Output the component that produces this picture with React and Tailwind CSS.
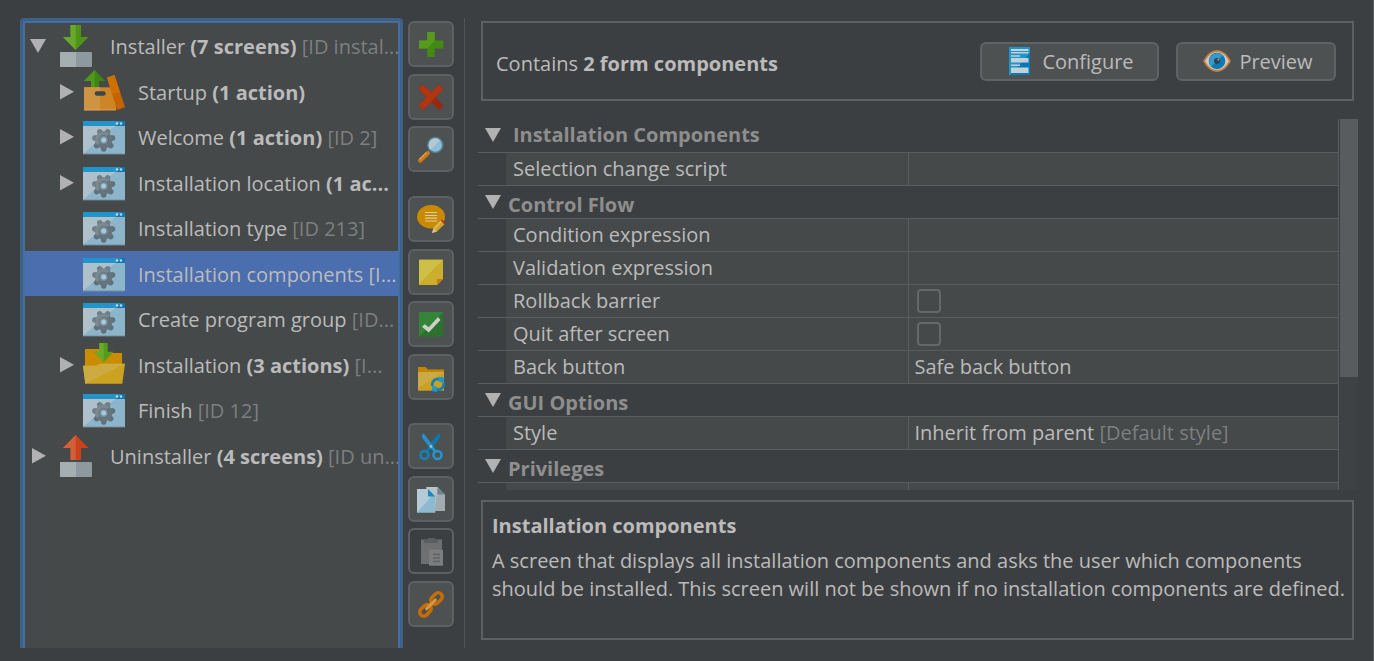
import React, { useState } from "react";

const TEETH = [90, 141.43, 192.86, 244.29, 295.71, 347.14, 38.57];

function WindowIcon() {
  return (
    <svg className="mb-0.5 shrink-0" width="42" height="42" viewBox="0 0 42 42" aria-hidden="true">
      <rect x="0" y="6" width="42" height="33" fill="#8cb5cb" />
      <path d="M0 6H38L0 39Z" fill="#aec1cb" />
      <rect x="0" y="38.4" width="42" height="1" fill="#7f95a0" />
      <rect x="0" y="6" width="42" height="5" fill="#2194cb" />
      <path d="M38 6H42V11H33Z" fill="#0879b4" />
      <circle cx="34" cy="8.5" r="1.3" fill="#c4d6df" />
      <circle cx="38" cy="8.5" r="1.3" fill="#c4d6df" />
      <g transform="translate(20.7 25)">
        {TEETH.map((a) => (
          <path key={a} d="M6-3.4 L10.6-2.4 Q11.8-2 11.8 0 Q11.8 2 10.6 2.4 L6 3.4Z" fill={a > 180 && a < 300 ? "#6f7e87" : "#61717b"} transform={`rotate(${a})`} />
        ))}
        <circle r="8.4" fill="#65747d" />
        <path d="M-6.6 5.2A8.4 8.4 0 0 1 5.6-6.3Z" fill="#7b8a91" />
        <circle r="4.6" fill="#7d8d96" stroke="#5c6d78" strokeWidth="0.8" />
        <circle r="2.5" fill="#a3cbe0" />
      </g>
    </svg>
  );
}

function InstallerIcon({ up }) {
  return (
    <svg className="shrink-0" width="32" height="42" viewBox="0 0 32 42" aria-hidden="true">
      <rect x="0" y="27" width="32" height="15" rx="1" fill="#8d999f" />
      <path d="M1 27H16V42H1Q0 42 0 41V28Q0 27 1 27Z" fill="#a5afb2" />
      {up ? (
        <>
          <path d="M15.700 0L28.500 13H21V25H10.500V13H3Z" fill="#ca431d" />
          <path d="M15.700 0L3 13H10.500V25H15.700Z" fill="#d0603a" />
        </>
      ) : (
        <>
          <path d="M10.500 0H21V12H28.500L15.700 25L3 12H10.500Z" fill="#4f9418" />
          <path d="M10.500 0H15.700V25L3 12H10.500Z" fill="#68a82c" />
        </>
      )}
    </svg>
  );
}

function StartupIcon() {
  return (
    <svg className="mb-0.5 shrink-0" width="42" height="42" viewBox="0 0 42 42" aria-hidden="true">
      <path d="M11.700 0L22.300 11H16V18H8V11H1Z" fill="#3f8511" />
      <path d="M11.700 0V18H8V11H1Z" fill="#4f981c" />
      <rect x="1" y="17.300" width="32" height="23" fill="#ce8526" />
      <path d="M1 17.300H17V40.300H1Z" fill="#cf9443" />
      <rect x="1" y="39.500" width="32" height="0.8" fill="#dfa458" />
      <rect x="11.700" y="21.300" width="11" height="4.400" rx="2.200" fill="#3c474c" />
      <path d="M24 7.500L31.500 5L42 37.300L34 40Z" fill="#c66300" />
      <path d="M24 7.500L31.500 5L37 22L29 24Z" fill="#cd7003" />
    </svg>
  );
}

function FolderInstallIcon() {
  return (
    <svg className="mb-0.5 shrink-0" width="42" height="42" viewBox="0 0 42 42" aria-hidden="true">
      <path d="M2 6H16L20 10H39V26H2Z" fill="#cb8c00" />
      <path d="M0 22.700H13.700L17 20.700H42L39.300 40.700H2.300Z" fill="#cca221" />
      <path d="M0 22.700H13.700L17 20.700H42L2.300 40.700Z" fill="#cbab42" />
      <path d="M16.300 0H24.700V8.700H30.500L20.700 19.300L11 8.700H16.300Z" fill="#579b1b" />
      <path d="M16.300 0H20.700V19.300L11 8.700H16.300Z" fill="#69aa2b" />
    </svg>
  );
}

function Triangle({ open }) {
  return (
    <svg className="shrink-0" width="16" height="16" viewBox="0 0 16 16" aria-hidden="true">
      {open ? <path d="M0 1H16L8 15Z" fill="#b1b1b1" /> : <path d="M2 0L16 7.700L2 15.500Z" fill="#b1b1b1" />}
    </svg>
  );
}

const TOOL_ICONS = {
  add: (
    <>
      <path d="M10.300 2H17.700V10.500H26.300V18.500H17.700V27H10.300V18.500H2V10.500H10.300Z" fill="#438a13" />
      <path d="M10.300 2H17.700V10.500L10.300 18.500H2V10.500H10.300Z" fill="#579b1c" />
    </>
  ),
  remove: (
    <>
      <path d="M1.500 6L6 1.500L14 9.500L22 1.500L26.500 6L18.500 14.300L26.500 22.500L22 27L14 19L6 27L1.500 22.500L9.500 14.300Z" fill="#98290d" />
      <path d="M1.500 6L6 1.500L14 9.500L22 1.500L26.500 6L6 27L1.500 22.500L9.500 14.300Z" fill="#b23512" />
    </>
  ),
  search: (
    <>
      <path d="M12.500 16.500L9.500 19.500" stroke="#7d8488" strokeWidth="2.500" />
      <path d="M10.500 18.500L3.200 25.500" stroke="#c97a12" strokeWidth="4.500" strokeLinecap="round" />
      <path d="M9.500 17.500L2.500 24.500" stroke="#dda050" strokeWidth="1.200" />
      <circle cx="18.300" cy="10" r="7.500" fill="#8fbdd3" stroke="#4e7d96" strokeWidth="1.600" />
      <path d="M13.500 14.800A6.700 6.700 0 0 1 23 5.200Z" fill="#b2c8d3" />
    </>
  ),
  comment: (
    <>
      <ellipse cx="14" cy="11.700" rx="14" ry="11.700" fill="#c98a00" />
      <path d="M8 7.500H20M8 10.500H20M8 13.200H20M8 16H20" stroke="#d9cda9" strokeWidth="1.200" />
      <path d="M15 28L16.500 23L23.500 15.500L27.500 19.300L20 26.500Z" fill="#d0a229" />
      <path d="M16.500 23L23.500 15.500L25 17L17.700 24.600Z" fill="#deb957" />
      <path d="M23.500 15.500L25 14.500L28 17.500L27.500 19.300Z" fill="#b93622" />
      <path d="M15 28L16.500 23L20 26.500Z" fill="#d6bd91" />
    </>
  ),
  note: (
    <>
      <path d="M2 1.700H26V21L20 27H2Z" fill="#ccae2d" />
      <path d="M2 1.700H26L2 26Z" fill="#cebf47" />
      <path d="M20 21H26L20 27Z" fill="#c87f11" />
    </>
  ),
  check: (
    <>
      <rect x="2" y="2" width="24.300" height="24.700" fill="#2d702f" />
      <path d="M2 2H26.300L2 26.700Z" fill="#358538" />
      <path d="M5 16.700L7.700 14.300L11.700 17.300L21 7L23.500 10L11.700 22.500Z" fill="#cbd0cb" />
    </>
  ),
  folder: (
    <>
      <path d="M1 4H8.500L11 6.500H27V12H1Z" fill="#c68500" />
      <rect x="1" y="9" width="26" height="18.700" fill="#cba122" />
      <path d="M1 9H27L1 25Z" fill="#cbaa45" />
      <path d="M15.500 23A5.600 5.600 0 0 1 23.500 16.500M26.500 19.500A5.600 5.600 0 0 1 18.500 26" fill="none" stroke="#157fb4" strokeWidth="2.700" />
      <path d="M22 13.700L27.500 14.500L26.500 20L21.500 18.500Z M20 29L14.500 28L15.500 22.500L20.500 24Z" fill="#2695ca" />
    </>
  ),
  cut: (
    <>
      <path d="M22.300 1.500Q24 4 22 7L10 21.500L7.500 20L20.500 2.500Z" fill="#0879b4" />
      <path d="M5.700 1.500Q4 4 6 7L18 21.500L20.500 20L7.500 2.500Z" fill="#2194cb" />
      <circle cx="7.500" cy="23" r="4" fill="none" stroke="#1580b7" strokeWidth="2.700" />
      <circle cx="20.500" cy="23" r="4" fill="none" stroke="#2194cb" strokeWidth="2.700" />
      <circle cx="14" cy="14.500" r="1.400" fill="#a7bac5" />
    </>
  ),
  copy: (
    <>
      <path d="M9.500 2H20.500L28 9.500V26H9.500Z" fill="#a2abb0" />
      <path d="M9.500 2H20.500L18 26H9.500Z" fill="#bbc3c6" />
      <path d="M20.500 2.500L28 9.500H20.500Z" fill="#6f838e" />
      <path d="M0 4H11L18.300 11.500V27.700H0Z" fill="#8dbad1" />
      <path d="M0 4H11L16 9.500L0 27.700Z" fill="#b2cbd7" />
      <path d="M11 4V11.500H18.300Z" fill="#1c89bd" />
    </>
  ),
  paste: (
    <>
      <rect x="4" y="2.500" width="21" height="24.500" fill="#6d6f70" />
      <path d="M7 2.500H11V1H18V2.500H21V6H7Z" fill="#5b5d5e" />
      <rect x="12" y="12.700" width="14" height="16" fill="#7b7d7e" />
      <path d="M16 17.500H23M16 21H23M16 24.500H23" stroke="#606263" strokeWidth="1.300" />
    </>
  ),
  link: (
    <>
      <g fill="none" strokeWidth="3.500">
        <rect x="-6.500" y="-4" width="13" height="8" rx="4" transform="translate(19.500 8.500) rotate(-45)" stroke="#c86d00" />
        <rect x="-6.500" y="-4" width="13" height="8" rx="4" transform="translate(8.500 20.300) rotate(-45)" stroke="#c86d00" />
      </g>
      <path d="M9.700 18.700L18.300 10" stroke="#d49845" strokeWidth="3.200" strokeLinecap="round" />
    </>
  ),
};

const TOOLS = [
  [["add", "Add"], ["remove", "Remove"], ["search", "Search"]],
  [["comment", "Edit comment"], ["note", "Note"], ["check", "Enable"], ["folder", "Convert folder"]],
  [["cut", "Cut"], ["copy", "Copy"], ["paste", "Paste"], ["link", "Link"]],
];

const TREE = [
  { root: true, arrow: "open", icon: <InstallerIcon />, name: "Installer", bold: "(7 screens)", id: "[ID instal..." },
  { arrow: "closed", icon: <StartupIcon />, name: "Startup", bold: "(1 action)" },
  { arrow: "closed", icon: <WindowIcon />, name: "Welcome", bold: "(1 action)", id: "[ID 2]" },
  { arrow: "closed", icon: <WindowIcon />, name: "Installation location", bold: "(1 ac..." },
  { icon: <WindowIcon />, name: "Installation type", id: "[ID 213]" },
  { icon: <WindowIcon />, name: "Installation components", id: "[I...", selected: true },
  { icon: <WindowIcon />, name: "Create program group", id: "[ID..." },
  { arrow: "closed", icon: <FolderInstallIcon />, name: "Installation", bold: "(3 actions)", id: "[I..." },
  { icon: <WindowIcon />, name: "Finish", id: "[ID 12]" },
  { root: true, arrow: "closed", icon: <InstallerIcon up />, name: "Uninstaller", bold: "(4 screens)", id: "[ID un..." },
];

function TreeRow({ item }) {
  return (
    <li
      role="treeitem"
      aria-selected={!!item.selected}
      className={`flex h-[45px] items-center whitespace-nowrap odd:mb-px ${item.root ? "pl-[5px]" : "pl-[33px]"} ${item.selected ? "bg-[#4b6eaf]" : ""}`}
    >
      <span className={`flex w-4 shrink-0 ${item.root ? "mr-[14px]" : "mr-[9px]"}`}>
        {item.arrow && <Triangle open={item.arrow === "open"} />}
      </span>
      {item.icon}
      <span className={`pt-[3px] ${item.root ? "ml-[18px]" : "ml-[13px]"}`}>
        {item.name}
        {item.bold && <b className="font-bold"> {item.bold}</b>}
        {item.id && <span className={item.selected ? "" : "text-[#7d7f80]"}> {item.id}</span>}
      </span>
    </li>
  );
}

function Category({ label, first }) {
  return (
    <tr className="h-[33px] border-b border-[#5a5d5f]">
      <th colSpan={3} scope="colgroup" className="p-0 text-left font-bold text-[#8e8e8e]">
        <span className={`flex items-center pl-[7px] ${first ? "gap-3" : "gap-[7px]"}`}>
          <Triangle open />
          <span className={first ? "leading-7" : "pt-1.5 leading-[26px]"}>{label}</span>
        </span>
      </th>
    </tr>
  );
}

function Property({ label, children }) {
  return (
    <tr className="h-[33px] border-b border-[#5a5d5f] bg-[#45494a]">
      <td className="bg-[#3c3f41] p-0" />
      <th scope="row" className="border-r border-[#5a5d5f] p-0 pl-[7px] text-left font-normal">{label}</th>
      <td className="p-0 pl-[6px]">{children}</td>
    </tr>
  );
}

function Check({ label }) {
  const [on, setOn] = useState(false);
  return (
    <input
      type="checkbox"
      aria-label={label}
      checked={on}
      onChange={() => setOn(!on)}
      className="ml-0.5 block size-6 appearance-none rounded border-2 border-[#656869] bg-[#45494a] checked:bg-[#4b6eaf]"
    />
  );
}

const PANEL_BUTTON = "flex h-[39px] items-center justify-center rounded-md border-2 border-[#606365] bg-[#4e5152]";

export default function App() {
  return (
    <div className="flex h-screen min-h-[640px] overflow-hidden border-r border-[#5e6163] bg-[#3c3f41] pt-[18px] pr-[15px] pb-[13px] pl-5 font-['Open_Sans','Noto_Sans',sans-serif] text-[20px] leading-7 text-[#bbbbbb]">
      <div className="w-[383px] shrink-0 overflow-hidden rounded-t-sm border-x-[3px] border-t-[3px] border-[#3d6185]">
        <ul role="tree" className="h-full overflow-hidden border-x-2 border-t-2 border-[#466d9f] bg-[#45494a]">
          {TREE.map((item) => (
            <TreeRow key={item.name} item={item} />
          ))}
        </ul>
      </div>

      <div className="flex shrink-0 flex-col gap-[23px] border-r border-[#515456] pt-[3px] pr-[10px] pl-[5px]">
        {TOOLS.map((group, i) => (
          <div key={i} className="flex flex-col gap-[6px]">
            {group.map(([key, label]) => (
              <button
                key={key}
                type="button"
                aria-label={label}
                disabled={key === "paste"}
                className="flex size-[46px] items-center justify-center rounded-md border-2 border-[#5e6162] bg-[#4e5152] odd:mb-px disabled:bg-[#3c3f41]"
              >
                <svg width="28" height="29" viewBox="0 0 28 29" aria-hidden="true">{TOOL_ICONS[key]}</svg>
              </button>
            ))}
          </div>
        ))}
      </div>

      <main className="ml-[13px] flex min-w-0 flex-1 flex-col pt-[3px]">
        <section className="mr-1 ml-[3px] flex h-20 shrink-0 items-center gap-[17px] border-2 border-[#5e6163] pr-4 pl-[13px]">
          <p className="mr-auto pt-1.5">
            Contains <b className="font-bold">2 form components</b>
          </p>
          <button type="button" className={`${PANEL_BUTTON} w-[179px] gap-3 pl-1`}>
            <svg width="21" height="28" viewBox="0 0 21 28" aria-hidden="true">
              <rect width="21" height="28" fill="#2194c9" />
              <path d="M21 6V28H1Z" fill="#0879b4" />
              <path d="M2 2H19.500V4H2ZM2 5H19.500V6.500H2ZM2 8.200H11V9.700H2ZM2 11H19.500V15.500H2ZM2 17.500H11V19H2ZM2 20.500H19.500V26H2Z" fill="#c2d0d8" />
            </svg>
            <span className="pt-0.5">Configure</span>
          </button>
          <button type="button" className={`${PANEL_BUTTON} w-40 gap-2 pl-1`}>
            <svg width="28" height="22" viewBox="0 0 28 22" aria-hidden="true">
              <path d="M0 11Q6 0 14 0T28 11Q22 22 14 22T0 11Z" fill="#c7803c" />
              <path d="M2 11Q7 2 14 2T26 11Q21 20 14 20T2 11Z" fill="#d0c9c1" />
              <circle cx="14" cy="11" r="8.300" fill="#0b7bb5" />
              <path d="M8 16.800A8.300 8.300 0 0 1 19.800 5.200Z" fill="#369bc8" />
              <circle cx="14" cy="11" r="3" fill="#33424b" />
              <circle cx="15.300" cy="9.700" r="0.900" fill="#8eb8cc" />
            </svg>
            <span className="pt-0.5">Preview</span>
          </button>
        </section>

        <section className="mt-[18px] flex min-h-0 flex-1 overflow-hidden">
          <div className="min-w-0 flex-1 overflow-hidden border-r border-[#5a5d5f]">
            <table className="w-full table-fixed border-collapse">
              <colgroup>
                <col className="w-7" />
                <col className="w-[402px]" />
                <col />
              </colgroup>
              <tbody>
                <Category label="Installation Components" first />
                <Property label="Selection change script" />
                <Category label="Control Flow" />
                <Property label="Condition expression" />
                <Property label="Validation expression" />
                <Property label="Rollback barrier"><Check label="Rollback barrier" /></Property>
                <Property label="Quit after screen"><Check label="Quit after screen" /></Property>
                <Property label="Back button">Safe back button</Property>
                <Category label="GUI Options" />
                <Property label="Style">
                  Inherit from parent <span className="text-[#7d7f80]">[Default style]</span>
                </Property>
                <Category label="Privileges" />
                <Property label="" />
              </tbody>
            </table>
          </div>
          <div className="ml-px w-[18px] bg-[#3f4244]">
            <div className="h-[258px] bg-[#585c5f]" />
          </div>
        </section>

        <section className="mt-[10px] mr-1 mb-2 ml-[3px] h-[140px] shrink-0 border-2 border-[#5e6163] pt-[10px] pl-[9px]">
          <h2 className="mb-[7px] font-bold">Installation components</h2>
          <p>
            A screen that displays all installation components and asks the user which components
            <br />
            should be installed. This screen will not be shown if no installation components are defined.
          </p>
        </section>
      </main>
    </div>
  );
}
